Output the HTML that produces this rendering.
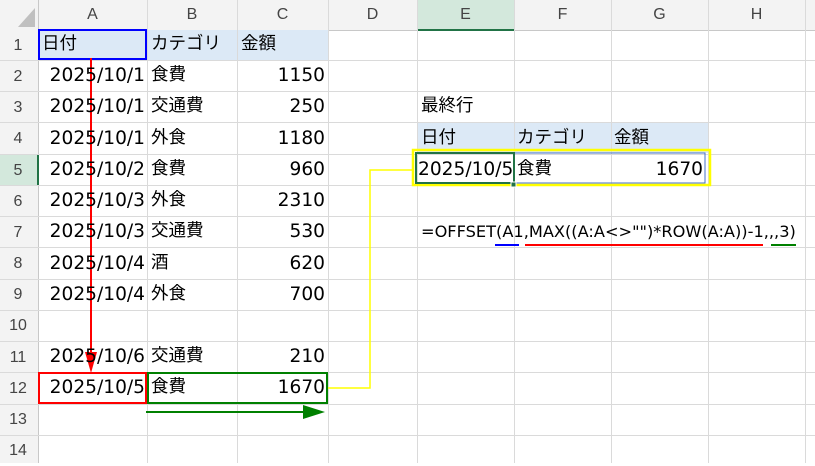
<!DOCTYPE html><html><head><meta charset="utf-8"><style>
body{margin:0;width:815px;height:463px;overflow:hidden;background:#fff;font-family:"DejaVu Sans","Noto Sans CJK JP",sans-serif;position:relative}
.a{position:absolute}
.t{position:absolute;font-size:17.5px;color:#000;white-space:nowrap;line-height:31px}
.n{font-size:18.6px}
.h{position:absolute;font-size:16px;color:#444;text-align:center;line-height:30px;font-family:"Liberation Sans",sans-serif}
</style></head><body>
<div class="a" style="left:0;top:0;width:815px;height:30px;background:#f3f3f3;border-bottom:1px solid #c8c8c8"></div>
<div class="a" style="left:0;top:0;width:38px;height:463px;background:#f3f3f3;border-right:1px solid #c8c8c8"></div>
<div class="a" style="left:417px;top:0;width:97px;height:29px;background:#d3e8dc;border-bottom:2px solid #217346"></div>
<div class="a" style="left:0;top:155px;width:37px;height:31px;background:#d3e8dc;border-right:2px solid #217346"></div>
<div class="a" style="left:39px;top:30px;width:289px;height:30px;background:#dce9f6"></div>
<div class="a" style="left:417px;top:123px;width:291px;height:30px;background:#dce9f6"></div>
<svg class="a" style="left:0;top:0" width="815" height="463">
<g stroke="#dadada" stroke-width="1">
<line x1="147.5" y1="0" x2="147.5" y2="463"/><line x1="237.5" y1="0" x2="237.5" y2="463"/><line x1="328.5" y1="0" x2="328.5" y2="463"/><line x1="417.5" y1="0" x2="417.5" y2="463"/><line x1="514.5" y1="0" x2="514.5" y2="463"/><line x1="611.5" y1="0" x2="611.5" y2="463"/><line x1="708.5" y1="0" x2="708.5" y2="463"/><line x1="805.5" y1="0" x2="805.5" y2="463"/>
<line x1="0" y1="60.5" x2="815" y2="60.5"/><line x1="0" y1="91.5" x2="815" y2="91.5"/><line x1="0" y1="122.5" x2="815" y2="122.5"/><line x1="0" y1="154.5" x2="815" y2="154.5"/><line x1="0" y1="185.5" x2="815" y2="185.5"/><line x1="0" y1="216.5" x2="815" y2="216.5"/><line x1="0" y1="247.5" x2="815" y2="247.5"/><line x1="0" y1="279.5" x2="815" y2="279.5"/><line x1="0" y1="310.5" x2="815" y2="310.5"/><line x1="0" y1="341.5" x2="815" y2="341.5"/><line x1="0" y1="372.5" x2="815" y2="372.5"/><line x1="0" y1="404.5" x2="815" y2="404.5"/><line x1="0" y1="435.5" x2="815" y2="435.5"/>
</g>
<polygon points="35,8 35,27 18,27" fill="#c0c0c0"/>
<rect x="39" y="30" width="107" height="29" fill="none" stroke="#0000ff" stroke-width="2"/>
<rect x="39" y="373" width="107" height="30" fill="none" stroke="#ff0000" stroke-width="2"/>
<rect x="148" y="373" width="179" height="30" fill="none" stroke="#008000" stroke-width="2"/>
<line x1="91" y1="58" x2="91" y2="360" stroke="#ff0000" stroke-width="2"/>
<polygon points="85,352 97,352 91,373" fill="#ff0000"/>
<line x1="146" y1="412" x2="306" y2="412" stroke="#008000" stroke-width="2"/>
<polygon points="303,405 303,419 325,412" fill="#008000"/>
<polyline points="328,388 370,388 370,170 413,170" fill="none" stroke="#ffff00" stroke-width="1.5"/>
<rect x="413" y="150" width="297" height="35" fill="none" stroke="#ffff00" stroke-width="2.5"/>
<rect x="514" y="153" width="191" height="30" fill="none" stroke="#4472c4" stroke-width="1"/>
<rect x="416" y="153" width="98" height="30" fill="none" stroke="#217346" stroke-width="2"/>
<rect x="511" y="182" width="5" height="5" fill="#217346" stroke="#fff" stroke-width="1"/>
<line x1="495" y1="245" x2="519" y2="245" stroke="#0000ff" stroke-width="2"/>
<line x1="525" y1="245" x2="763" y2="245" stroke="#ff0000" stroke-width="2"/>
<line x1="771" y1="245" x2="796" y2="245" stroke="#008000" stroke-width="2"/>
</svg>
<div class="h" style="left:38px;top:0;width:109px">A</div><div class="h" style="left:147px;top:0;width:90px">B</div><div class="h" style="left:237px;top:0;width:91px">C</div><div class="h" style="left:328px;top:0;width:89px">D</div><div class="h" style="left:417px;top:0;width:97px">E</div><div class="h" style="left:514px;top:0;width:97px">F</div><div class="h" style="left:611px;top:0;width:97px">G</div><div class="h" style="left:708px;top:0;width:97px">H</div>
<div class="h" style="left:0;top:30px;width:36px;line-height:31px">1</div><div class="h" style="left:0;top:61px;width:36px;line-height:31px">2</div><div class="h" style="left:0;top:92px;width:36px;line-height:31px">3</div><div class="h" style="left:0;top:123px;width:36px;line-height:31px">4</div><div class="h" style="left:0;top:155px;width:36px;line-height:31px">5</div><div class="h" style="left:0;top:186px;width:36px;line-height:31px">6</div><div class="h" style="left:0;top:217px;width:36px;line-height:31px">7</div><div class="h" style="left:0;top:248px;width:36px;line-height:31px">8</div><div class="h" style="left:0;top:279px;width:36px;line-height:31px">9</div><div class="h" style="left:0;top:310px;width:36px;line-height:31px">10</div><div class="h" style="left:0;top:342px;width:36px;line-height:31px">11</div><div class="h" style="left:0;top:373px;width:36px;line-height:31px">12</div><div class="h" style="left:0;top:404px;width:36px;line-height:31px">13</div><div class="h" style="left:0;top:435px;width:36px;line-height:31px">14</div>
<div class="t" style="left:42px;top:29px">日付</div><div class="t" style="left:151px;top:29px">カテゴリ</div><div class="t" style="left:241px;top:29px">金額</div>
<div class="t n" style="left:30px;top:60px;width:115px;text-align:right">2025/10/1</div><div class="t" style="left:151px;top:60px">食費</div><div class="t n" style="left:240px;top:60px;width:85px;text-align:right">1150</div>
<div class="t n" style="left:30px;top:91px;width:115px;text-align:right">2025/10/1</div><div class="t" style="left:151px;top:91px">交通費</div><div class="t n" style="left:240px;top:91px;width:85px;text-align:right">250</div>
<div class="t n" style="left:30px;top:123px;width:115px;text-align:right">2025/10/1</div><div class="t" style="left:151px;top:123px">外食</div><div class="t n" style="left:240px;top:123px;width:85px;text-align:right">1180</div>
<div class="t n" style="left:30px;top:154px;width:115px;text-align:right">2025/10/2</div><div class="t" style="left:151px;top:154px">食費</div><div class="t n" style="left:240px;top:154px;width:85px;text-align:right">960</div>
<div class="t n" style="left:30px;top:185px;width:115px;text-align:right">2025/10/3</div><div class="t" style="left:151px;top:185px">外食</div><div class="t n" style="left:240px;top:185px;width:85px;text-align:right">2310</div>
<div class="t n" style="left:30px;top:216px;width:115px;text-align:right">2025/10/3</div><div class="t" style="left:151px;top:216px">交通費</div><div class="t n" style="left:240px;top:216px;width:85px;text-align:right">530</div>
<div class="t n" style="left:30px;top:248px;width:115px;text-align:right">2025/10/4</div><div class="t" style="left:151px;top:248px">酒</div><div class="t n" style="left:240px;top:248px;width:85px;text-align:right">620</div>
<div class="t n" style="left:30px;top:279px;width:115px;text-align:right">2025/10/4</div><div class="t" style="left:151px;top:279px">外食</div><div class="t n" style="left:240px;top:279px;width:85px;text-align:right">700</div>
<div class="t n" style="left:30px;top:341px;width:115px;text-align:right">2025/10/6</div><div class="t" style="left:151px;top:341px">交通費</div><div class="t n" style="left:240px;top:341px;width:85px;text-align:right">210</div>
<div class="t n" style="left:30px;top:372px;width:115px;text-align:right">2025/10/5</div><div class="t" style="left:151px;top:372px">食費</div><div class="t n" style="left:240px;top:372px;width:85px;text-align:right">1670</div>
<div class="t" style="left:421px;top:91px">最終行</div>
<div class="t" style="left:421px;top:123px">日付</div><div class="t" style="left:517px;top:123px">カテゴリ</div><div class="t" style="left:614px;top:123px">金額</div>
<div class="t n" style="left:418px;top:154px">2025/10/5</div><div class="t" style="left:517px;top:154px">食費</div><div class="t n" style="left:610px;top:154px;width:93px;text-align:right">1670</div>
<div class="t" style="left:421px;top:216px;font-size:16.2px">=OFFSET(A1,MAX((A:A&lt;&gt;"")*ROW(A:A))-1,,,3)</div>
</body></html>
